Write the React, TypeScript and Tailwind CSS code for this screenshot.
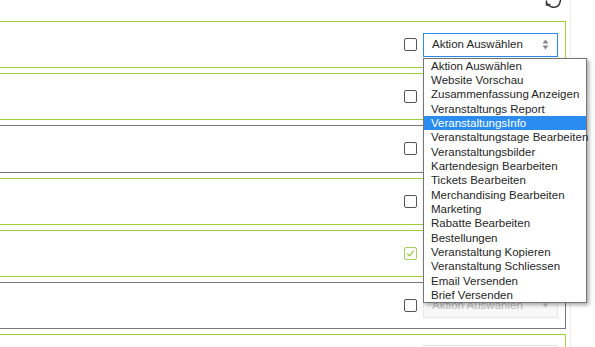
import React from "react";

const items = [
  "Aktion Auswählen",
  "Website Vorschau",
  "Zusammenfassung Anzeigen",
  "Veranstaltungs Report",
  "VeranstaltungsInfo",
  "Veranstaltungstage Bearbeiten",
  "Veranstaltungsbilder",
  "Kartendesign Bearbeiten",
  "Tickets Bearbeiten",
  "Merchandising Bearbeiten",
  "Marketing",
  "Rabatte Bearbeiten",
  "Bestellungen",
  "Veranstaltung Kopieren",
  "Veranstaltung Schliessen",
  "Email Versenden",
  "Brief Versenden",
];

type RowProps = { color: "green" | "gray"; checked?: boolean; open?: boolean; faded?: boolean };

function Checkbox({ checked }: { checked?: boolean }) {
  if (checked) {
    return (
      <div className="w-[13px] h-[13px] border border-[#a6d15a] rounded-[2px] flex items-center justify-center bg-white">
        <svg width="9" height="9" viewBox="0 0 9 9">
          <path d="M1.2 4.6 L3.5 6.8 L7.8 1.8" fill="none" stroke="#9acd32" strokeWidth="1.3" />
        </svg>
      </div>
    );
  }
  return <div className="w-[13px] h-[13px] border-[1.5px] border-[#555] rounded-[2px] bg-white" />;
}

function Row({ color, checked, open, faded }: RowProps) {
  const border = color === "green" ? "border-[#9fd03a]" : "border-[#777]";
  return (
    <div className={`h-[47.2px] border ${border} border-l-0 flex items-center justify-end pr-[7px] shrink-0`}>
      <div className="flex items-center gap-[6px]">
        <Checkbox checked={checked} />
        <div className="relative">
          {open ? (
            <div className="w-[135px] h-[24px] border border-[#2b8cf0] bg-white flex items-center justify-between pl-[8px] pr-[8px]">
              <span className="text-[11.5px] text-[#262626]">Aktion Auswählen</span>
              <svg width="7" height="11" viewBox="0 0 7 11">
                <path d="M3.5 0.5 L6.5 4.5 H0.5 Z" fill="#888" />
                <path d="M3.5 10.5 L6.5 6.5 H0.5 Z" fill="#888" />
              </svg>
            </div>
          ) : (
            <div className="w-[135px] h-[25px] border border-[#e6e6e6] bg-gradient-to-b from-white to-[#f6f6f6] flex items-center justify-between pl-[8px] pr-[8px]">
              <span className={`text-[11.5px] ${faded ? "text-[#c0c0c0]" : "text-[#262626]"}`}>Aktion Auswählen</span>
              <svg width="7" height="5" viewBox="0 0 7 5">
                <path d="M3.5 4.5 L6.5 0.5 H0.5 Z" fill="#c4c4c4" />
              </svg>
            </div>
          )}
          {open && (
            <div className="absolute left-0 top-[25px] w-[164px] border border-[#777] bg-white shadow-[2px_2px_4px_rgba(0,0,0,0.35)] z-10">
              {items.map((it, i) => (
                <div
                  key={it}
                  className={`h-[14.35px] leading-[14.35px] pl-[7px] text-[11.5px] whitespace-nowrap ${
                    i === 4 ? "bg-[#2b8cf0] text-white" : "text-[#262626]"
                  }`}
                >
                  {it}
                </div>
              ))}
            </div>
          )}
        </div>
      </div>
    </div>
  );
}

export default function App() {
  return (
    <div
      className="w-[595px] h-[347px] overflow-hidden bg-white relative flex"
      style={{ fontFamily: '"Liberation Sans", Arial, sans-serif' }}
    >
      <div className="w-[566px] shrink-0 flex flex-col pt-[21px] gap-[5px]">
        <Row color="green" open />
        <Row color="green" />
        <Row color="gray" />
        <Row color="green" />
        <Row color="green" checked />
        <Row color="gray" faded />
        <Row color="green" />
      </div>
      <div className="ml-[4px] w-px h-full bg-[#ececec]" />
      <svg className="absolute left-[544px] top-0" width="20" height="10" viewBox="0 0 20 10">
        <path d="M3 3.5 C5 6.5 9 8 12.5 6.8 C14.5 6 16 4 16.5 0" fill="none" stroke="#333" strokeWidth="1.5" />
        <path d="M2.5 0.5 L2.5 5 L6.5 4.5" fill="none" stroke="#333" strokeWidth="1.5" />
      </svg>
    </div>
  );
}
